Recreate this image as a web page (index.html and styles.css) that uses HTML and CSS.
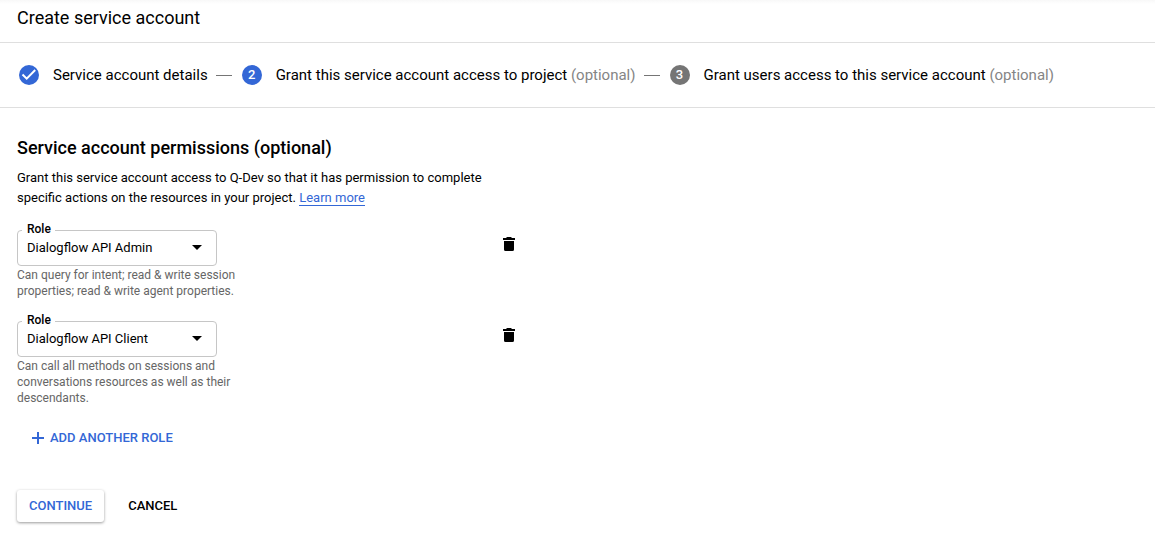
FILE: index.html
```html
<!DOCTYPE html>
<html lang="en">
<head>
<meta charset="utf-8">
<meta name="viewport" content="width=device-width, initial-scale=1">
<title>Create service account</title>
<link rel="stylesheet" href="styles.css">
</head>
<body>
<header class="page-header">
  <h1 class="page-title">Create service account</h1>
</header>
<ol class="stepper">
  <li class="step">
    <svg class="badge badge-done" viewBox="0 0 20 20" role="img" aria-label="Completed"><path d="M3.500 9.500l4.200 4.200 8.500-8.700" fill="none" stroke="#fff" stroke-width="2"/></svg>
    <span class="step-label">Service account details</span>
  </li>
  <li class="step">
    <span class="badge">2</span>
    <span class="step-label">Grant this service account access to project <span class="optional">(optional)</span></span>
  </li>
  <li class="step">
    <span class="badge badge-pending">3</span>
    <span class="step-label">Grant users access to this service account <span class="optional">(optional)</span></span>
  </li>
</ol>
<main class="content">
  <h2 class="section-title">Service account permissions (optional)</h2>
  <p class="description">Grant this service account access to Q-Dev so that it has permission to complete specific actions on the resources in your project. <a class="link" href="#">Learn more</a></p>
  <form class="form">
    <div class="roles">
      <div class="role">
        <div class="role-main">
          <div class="field">
            <label class="field-label" for="role-1">Role</label>
            <select class="select" id="role-1" aria-describedby="role-1-help"><option>Dialogflow API Admin</option></select>
            <svg class="arrow" viewBox="0 0 10 5" aria-hidden="true"><path d="M0 0h10L5 5z"/></svg>
          </div>
          <p class="helper" id="role-1-help">Can query for intent; read &amp; write session properties; read &amp; write agent properties.</p>
        </div>
        <button class="delete" type="button" aria-label="Delete role"><svg class="trash" viewBox="0 0 12 14" aria-hidden="true"><path d="M0 1h3l1-1h4l1 1h3v2H0zM1 4h10v8.500a1.500 1.500 0 0 1-1.500 1.500h-7A1.500 1.500 0 0 1 1 12.500z"/></svg></button>
      </div>
      <div class="role">
        <div class="role-main">
          <div class="field">
            <label class="field-label" for="role-2">Role</label>
            <select class="select" id="role-2" aria-describedby="role-2-help"><option>Dialogflow API Client</option></select>
            <svg class="arrow" viewBox="0 0 10 5" aria-hidden="true"><path d="M0 0h10L5 5z"/></svg>
          </div>
          <p class="helper" id="role-2-help">Can call all methods on sessions and conversations resources as well as their descendants.</p>
        </div>
        <button class="delete" type="button" aria-label="Delete role"><svg class="trash" viewBox="0 0 12 14" aria-hidden="true"><path d="M0 1h3l1-1h4l1 1h3v2H0zM1 4h10v8.500a1.500 1.500 0 0 1-1.500 1.500h-7A1.500 1.500 0 0 1 1 12.500z"/></svg></button>
      </div>
    </div>
    <button class="button button-add" type="button"><svg class="plus" viewBox="0 0 12 12" aria-hidden="true"><path d="M5 0h2v5h5v2H7v5H5V7H0V5h5z" fill="currentColor"/></svg>ADD ANOTHER ROLE</button>
    <div class="actions">
      <button class="button button-raised" type="button">CONTINUE</button>
      <button class="button button-plain" type="button">CANCEL</button>
    </div>
  </form>
</main>
</body>
</html>
```

FILE: styles.css
```css
* {
  box-sizing: border-box;
}

body {
  margin: 0;
  background: #fff;
  color: #000;
  font: 13px/20px Roboto, sans-serif;
}

h1, h2, p, ol {
  margin: 0;
  padding: 0;
}

.page-header {
  padding: 6px 17px 12px;
  border-bottom: 1px solid #dfdfdf;
  background: linear-gradient(#f8f8f8, #fff 4px);
}

.page-title {
  font-size: 18px;
  line-height: 24px;
  font-weight: 400;
}

.stepper {
  display: flex;
  padding: 20px 19px;
  border-bottom: 1px solid #dfdfdf;
  list-style: none;
  font-size: 15px;
  line-height: 24px;
  white-space: nowrap;
}

.step {
  display: flex;
  align-items: center;
}

.step + .step::before {
  content: "";
  width: 16px;
  height: 1px;
  margin: 0 10px 0 8px;
  background: #757575;
}

.badge {
  width: 20px;
  height: 20px;
  margin-right: 14px;
  border-radius: 50%;
  background: #3367d6;
  color: #fff;
  font-size: 13px;
  line-height: 20px;
  font-weight: 500;
  text-align: center;
}

.badge-pending {
  background: #757575;
}

.optional {
  color: #858585;
}

.content {
  padding: 28px 17px 20px;
}

.section-title {
  font-size: 18px;
  line-height: 24px;
  font-weight: 500;
}

.description {
  max-width: 480px;
  margin-top: 8px;
}

.link {
  border-bottom: 1px solid #3367d6;
  color: #3367d6;
  text-decoration: none;
}

.form {
  max-width: 500px;
  margin-top: 22px;
}

.roles {
  display: grid;
  gap: 22px;
}

.role {
  display: flex;
  justify-content: space-between;
  align-items: flex-start;
}

.role-main {
  max-width: 220px;
}

.field {
  position: relative;
  width: 200px;
}

.field-label {
  position: absolute;
  top: -9px;
  left: 5px;
  padding: 0 4px 0 5px;
  background: #fff;
  font-size: 12px;
  line-height: 16px;
  font-weight: 500;
}

.select {
  display: block;
  width: 100%;
  height: 36px;
  padding: 0 30px 0 9px;
  border: 1px solid #c6c6c6;
  border-radius: 4px;
  background: transparent;
  color: #000;
  font: inherit;
  appearance: none;
}

.arrow {
  position: absolute;
  top: 15px;
  right: 15px;
  width: 10px;
  height: 5px;
  pointer-events: none;
}

.helper {
  margin-top: 1px;
  color: #666;
  font-size: 12px;
  line-height: 16px;
}

.delete {
  display: flex;
  padding: 7px 2px;
  border: 0;
  background: none;
  color: #000;
}

.trash {
  width: 12px;
  height: 14px;
}

.button {
  height: 32px;
  padding: 0 12px;
  border: 0;
  border-radius: 3px;
  background: #fff;
  color: #3367d6;
  font: 500 13px/32px Roboto, sans-serif;
  cursor: pointer;
}

.button-add {
  display: flex;
  align-items: center;
  gap: 6px;
  margin-top: 16px;
  padding: 0 15px;
}

.plus {
  width: 12px;
  height: 12px;
}

.actions {
  display: flex;
  gap: 12px;
  margin-top: 36px;
}

.button-raised {
  box-shadow: 0 1px 3px rgba(0, 0, 0, 0.4);
}

.button-plain {
  color: #000;
}
```
